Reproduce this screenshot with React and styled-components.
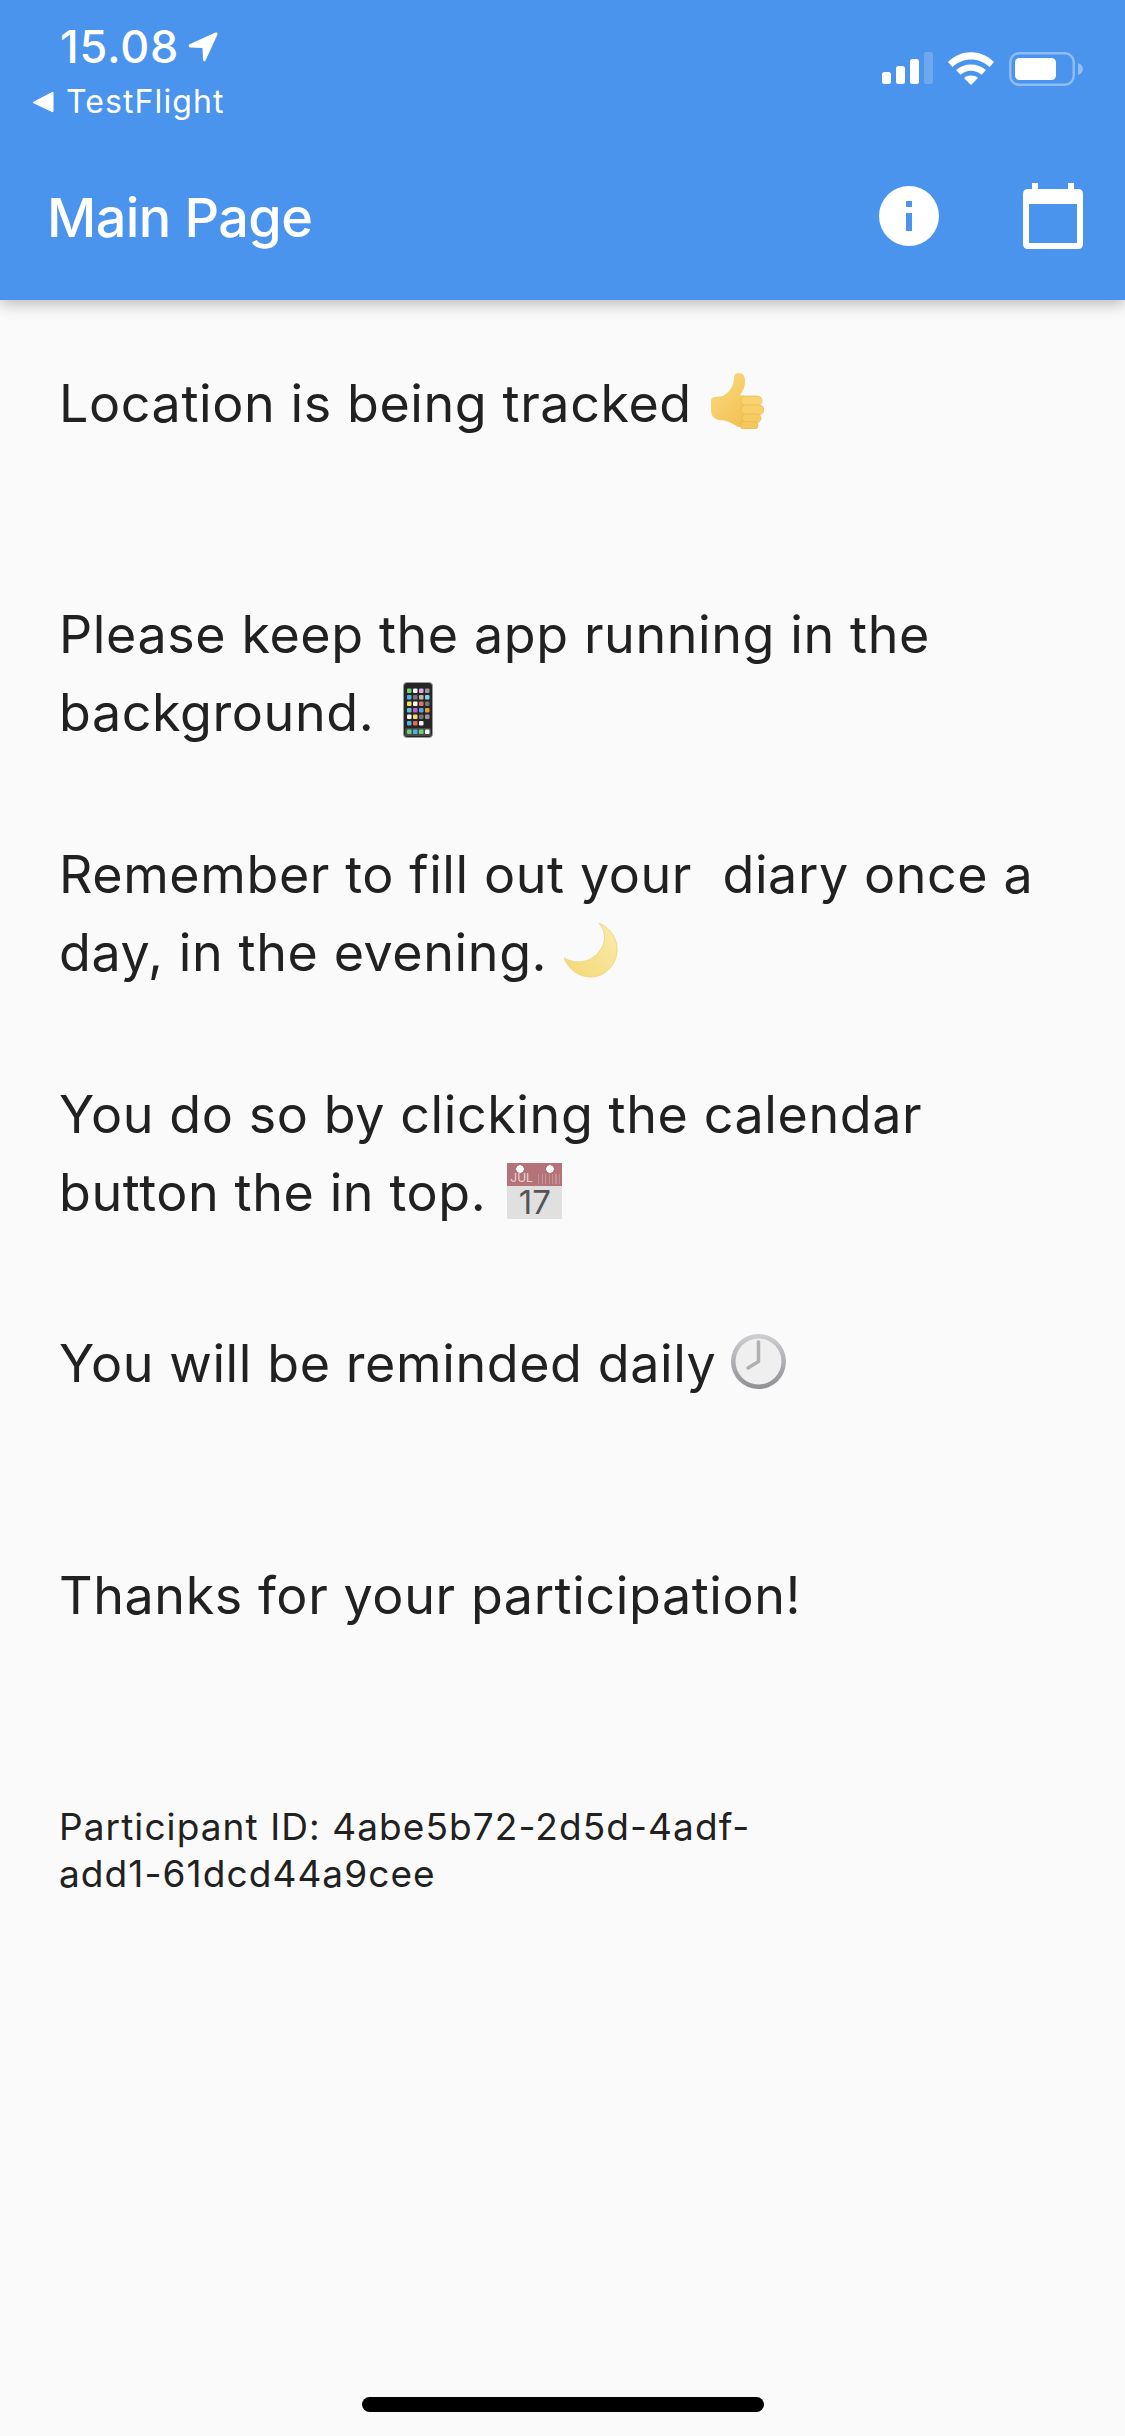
import React from 'react'
import styled, { createGlobalStyle } from 'styled-components'

const GlobalStyle = createGlobalStyle`
  html, body {
    margin: 0;
    padding: 0;
    background: #fafafa;
  }
`

const Page = styled.div`
  position: relative;
  width: 1125px;
  height: 2436px;
  overflow: hidden;
  display: flex;
  flex-direction: column;
  background: #fafafa;
  font-family: Inter, "Liberation Sans", sans-serif;
  color: #212121;
`

const Header = styled.header`
  height: 300px;
  flex: none;
  background: #4a94ed;
  box-shadow: 0 4px 14px rgba(0, 0, 0, 0.26);
  color: #fff;
  display: flex;
  flex-direction: column;
  position: relative;
  z-index: 2;
`

const StatusBar = styled.div`
  height: 132px;
  flex: none;
  display: flex;
  justify-content: space-between;
`

const StatusLeft = styled.div`
  display: flex;
  flex-direction: column;
  padding: 24px 0 0 32px;
`

const TimeRow = styled.div`
  display: flex;
  align-items: center;
  gap: 9px;
  padding-left: 28px;
  height: 46px;
`

const Time = styled.span`
  font-size: 45px;
  font-weight: 500;
  letter-spacing: 0.8px;
  line-height: 46px;
`

const BackRow = styled.div`
  display: flex;
  align-items: center;
  gap: 12px;
  height: 44px;
  margin-top: 10px;
`

const BackLabel = styled.span`
  font-size: 32px;
  letter-spacing: 1.1px;
  line-height: 44px;
`

const StatusRight = styled.div`
  display: flex;
  align-items: flex-start;
  gap: 15px;
  padding: 52px 42px 0 0;
`

const TitleBar = styled.div`
  flex: 1;
  display: flex;
  align-items: center;
  justify-content: space-between;
  padding: 0 42px 0 47px;
`

const Title = styled.h1`
  margin: 0;
  padding-top: 3px;
  font-size: 54px;
  font-weight: 500;
  line-height: 60px;
  letter-spacing: -0.6px;
`

const Actions = styled.div`
  display: flex;
  align-items: center;
  gap: 84px;
`

const Content = styled.main`
  flex: 1;
  display: flex;
  flex-direction: column;
  padding: 0 48px 0 59px;
`

const Message = styled.p`
  margin: ${p => p.$top}px 0 0;
  font-size: 52px;
  line-height: 78px;
  font-weight: 400;
  letter-spacing: 0.6px;
  white-space: pre;
`

const SmallPrint = styled.p`
  margin: ${p => p.$top}px 0 0;
  font-size: 37px;
  line-height: 47px;
  letter-spacing: 1.08px;
  white-space: pre;
`

const Emoji = styled.svg`
  display: inline-block;
  vertical-align: -7px;
  margin-left: ${p => p.$gap}px;
`

const CalendarTile = styled.span`
  display: inline-flex;
  flex-direction: column;
  width: 55px;
  height: 56px;
  margin: 9px 0 0 21px;
  vertical-align: top;
  background: #e0e0e0;
  font-family: Inter, sans-serif;
  letter-spacing: 0;
`

const TileBand = styled.span`
  height: 23px;
  padding: 8px 0 0 3px;
  box-sizing: border-box;
  background-color: #b47378;
  background-image:
    radial-gradient(circle at 13px 6px, #fff 3.5px, transparent 4px),
    radial-gradient(circle at 43px 6px, #fff 3.5px, transparent 4px),
    repeating-linear-gradient(90deg, rgba(255, 255, 255, 0.22) 0 1px, transparent 1px 3.5px);
  background-size: auto, auto, 22px 10px;
  background-position: 0 0, 0 0, 31px 11px;
  background-repeat: no-repeat;
  color: #e9d6d7;
  font-size: 12px;
  line-height: 14px;
`

const TileDay = styled.span`
  flex: 1;
  text-align: center;
  color: #555;
  font-size: 33px;
  line-height: 33px;
`

const HomeIndicator = styled.div`
  position: absolute;
  left: 362px;
  bottom: 24px;
  width: 402px;
  height: 15px;
  border-radius: 8px;
  background: #000;
`

const LocationArrow = () => (
  <svg width="30" height="30" viewBox="0 0 30 30">
    <path d="M1 12.500 L27.500 0.500 Q30 0 29.500 2.500 L17.500 28.500 Q16 30.500 15 28 L14.500 16 L2 15.500 Q0 14.500 1 12.500 Z" fill="#fff" />
  </svg>
)

const BackArrow = () => (
  <svg width="22" height="22" viewBox="0 0 22 22">
    <path d="M1 11 L20 1 Q21.500 0.500 21.500 2 L21.500 20 Q21.500 21.500 20 21 L1 12 Z" fill="#fff" />
  </svg>
)

const Signal = () => (
  <svg width="51" height="33" viewBox="0 0 51 33" fill="#fff">
    <rect x="0" y="20" width="9" height="12" rx="2.500" />
    <rect x="14" y="14" width="9" height="18" rx="2.500" />
    <rect x="28" y="7" width="9" height="25" rx="2.500" />
    <rect x="42" y="0" width="9" height="32" rx="2.500" opacity="0.2" />
  </svg>
)

const Wifi = () => (
  <svg width="46" height="33" viewBox="0 0 46 33" fill="#fff">
    <path d="M0 10 C13 -3 33 -3 46 10 L41.500 15 C31 5 15 5 4.500 15 Z" />
    <path d="M8 18 C16 10.500 30 10.500 38 18 L33.500 22.800 C27 17.500 19 17.500 12.500 22.800 Z" />
    <path d="M16 26 C20 22.800 26 22.800 30 26 L23 33 Z" />
  </svg>
)

const Battery = () => (
  <svg width="74" height="34" viewBox="0 0 74 34">
    <rect x="1.250" y="1.250" width="63.500" height="31.500" rx="9" fill="none" stroke="#fff" strokeOpacity="0.38" strokeWidth="2.500" />
    <rect x="6" y="6" width="41" height="22" rx="4.500" fill="#fff" />
    <path d="M69 11 C72 12 74 14.500 74 17 C74 19.500 72 22 69 23 Z" fill="#fff" fillOpacity="0.4" />
  </svg>
)

const InfoIcon = () => (
  <svg width="60" height="60" viewBox="0 0 60 60">
    <path fillRule="evenodd" d="M30 0 A30 30 0 1 0 30 60 A30 30 0 1 0 30 0 Z M27 15 H33 V21 H27 Z M27 27 H33 V45 H27 Z" fill="#fff" />
  </svg>
)

const CalendarIcon = () => (
  <svg width="60" height="66" viewBox="0 0 60 66">
    <path fillRule="evenodd" d="M9 0 H15 V6 H45 V0 H51 V6 H55 Q60 6 60 11 V61 Q60 66 55 66 H5 Q0 66 0 61 V11 Q0 6 5 6 H9 Z M6 21 V60 H54 V21 Z" fill="#fff" />
  </svg>
)

const ThumbsUp = () => (
  <Emoji width="54" height="56" viewBox="0 0 54 56" $gap={18}>
    <defs>
      <linearGradient id="thumb" x1="0" y1="0" x2="0.700" y2="1">
        <stop offset="0" stopColor="#fbdc80" />
        <stop offset="1" stopColor="#f3c257" />
      </linearGradient>
    </defs>
    <path d="M1 28 Q1 24 5 24 L13 23 C20 19 24 12 24 5 Q24 0 29 0 Q35 0 35 8 C35 14 33 18 30 22 L36 23 L38 52 L28 54 C22 50 16 47 9 47 Q2 46 1 38 Z" fill="url(#thumb)" />
    <rect x="31" y="23" width="21" height="9.500" rx="4.700" fill="#f9d36e" stroke="#eab64e" strokeWidth="0.700" />
    <rect x="31" y="32" width="23" height="9.500" rx="4.700" fill="#f8cf69" stroke="#eab64e" strokeWidth="0.700" />
    <rect x="32" y="41" width="19" height="8.500" rx="4.200" fill="#f7cb62" stroke="#eab64e" strokeWidth="0.700" />
    <rect x="30" y="48.500" width="18" height="7.500" rx="3.700" fill="#f5c65b" stroke="#eab64e" strokeWidth="0.700" />
  </Emoji>
)

const AppTile = ({ x, y, color }) => <rect x={x} y={y} width="4.500" height="4.500" rx="1" fill={color} />

const phoneRows = [
  ['#6fd66b', '#f5f5f5', '#d9a8ec', '#9a9a9a'],
  ['#4cb2ee', '#777', '#c9b69a', '#74d6f0'],
  ['#f3df63', '#f5f5f5', '#e3746a', '#777'],
  ['#58c8d8', '#c85cc8', '#4aa8ee', '#ee9c32'],
  ['#f5f5f5', '#f3df63', '#777', '#9a9a9a'],
  ['#4cb2ee', '#e8665c', '#f5f5f5', null]
]

const Phone = () => (
  <Emoji width="30" height="56" viewBox="0 0 30 56" $gap={29}>
    <rect x="0.500" y="0.500" width="29" height="55" rx="3.500" fill="#262626" stroke="#9a9a9a" />
    {phoneRows.map((row, r) =>
      row.map((color, c) => color && (
        <AppTile key={`${r}-${c}`} x={4 + c * 6} y={6.500 + r * 6.500} color={color} />
      ))
    )}
    <rect x="2" y="46" width="26" height="8" rx="1.500" fill="#4a4a4a" />
    {['#6fd66b', '#4cb2ee', '#6fd66b', '#f5f5f5'].map((color, c) => (
      <AppTile key={c} x={4 + c * 6} y={47.500} color={color} />
    ))}
  </Emoji>
)

const Moon = () => (
  <Emoji width="54" height="55" viewBox="0 0 54 55" $gap={17}>
    <defs>
      <linearGradient id="moon" x1="0.200" y1="0.900" x2="0.900" y2="0.300">
        <stop offset="0" stopColor="#f6da7c" />
        <stop offset="1" stopColor="#f9e8a2" />
      </linearGradient>
    </defs>
    <path d="M35 0 C48 6 54 17 53 29 C51 44 40 54 27 54 C15 54 5 47 0 35 C13 42 26 39 34 30 C42 21 43 10 35 0 Z" fill="url(#moon)" stroke="#ecd07a" strokeWidth="0.800" />
  </Emoji>
)

const ClockEmoji = () => (
  <Emoji width="55" height="55" viewBox="0 0 55 55" $gap={15}>
    <defs>
      <linearGradient id="rim" x1="0" y1="0" x2="0" y2="1">
        <stop offset="0" stopColor="#cfcfd3" />
        <stop offset="1" stopColor="#8f8f94" />
      </linearGradient>
    </defs>
    <circle cx="27.500" cy="27.500" r="27.500" fill="url(#rim)" />
    <circle cx="27.500" cy="27.500" r="23" fill="#efeff0" />
    <path d="M27.500 27.500 V8 M27.500 27.500 L17 34" stroke="#b0b0b4" strokeWidth="3.500" strokeLinecap="round" fill="none" />
  </Emoji>
)

export default function App () {
  return (
    <Page>
      <GlobalStyle />
      <Header>
        <StatusBar>
          <StatusLeft>
            <TimeRow>
              <Time>15.08</Time>
              <LocationArrow />
            </TimeRow>
            <BackRow>
              <BackArrow />
              <BackLabel>TestFlight</BackLabel>
            </BackRow>
          </StatusLeft>
          <StatusRight>
            <Signal />
            <Wifi />
            <Battery />
          </StatusRight>
        </StatusBar>
        <TitleBar>
          <Title>Main Page</Title>
          <Actions>
            <InfoIcon />
            <CalendarIcon />
          </Actions>
        </TitleBar>
      </Header>
      <Content>
        <Message $top={65}>Location is being tracked<ThumbsUp /></Message>
        <Message $top={153}>{'Please keep the app running in the\nbackground.'}<Phone /></Message>
        <Message $top={84}>{'Remember to fill out your  diary once a\nday, in the evening.'}<Moon /></Message>
        <Message $top={84}>
          {'You do so by clicking the calendar\nbutton the in top.'}
          <CalendarTile>
            <TileBand>JUL</TileBand>
            <TileDay>17</TileDay>
          </CalendarTile>
        </Message>
        <Message $top={93}>You will be reminded daily<ClockEmoji /></Message>
        <Message $top={154}>Thanks for your participation!</Message>
        <SmallPrint $top={168}>{'Participant ID: 4abe5b72-2d5d-4adf-\nadd1-61dcd44a9cee'}</SmallPrint>
      </Content>
      <HomeIndicator />
    </Page>
  )
}
